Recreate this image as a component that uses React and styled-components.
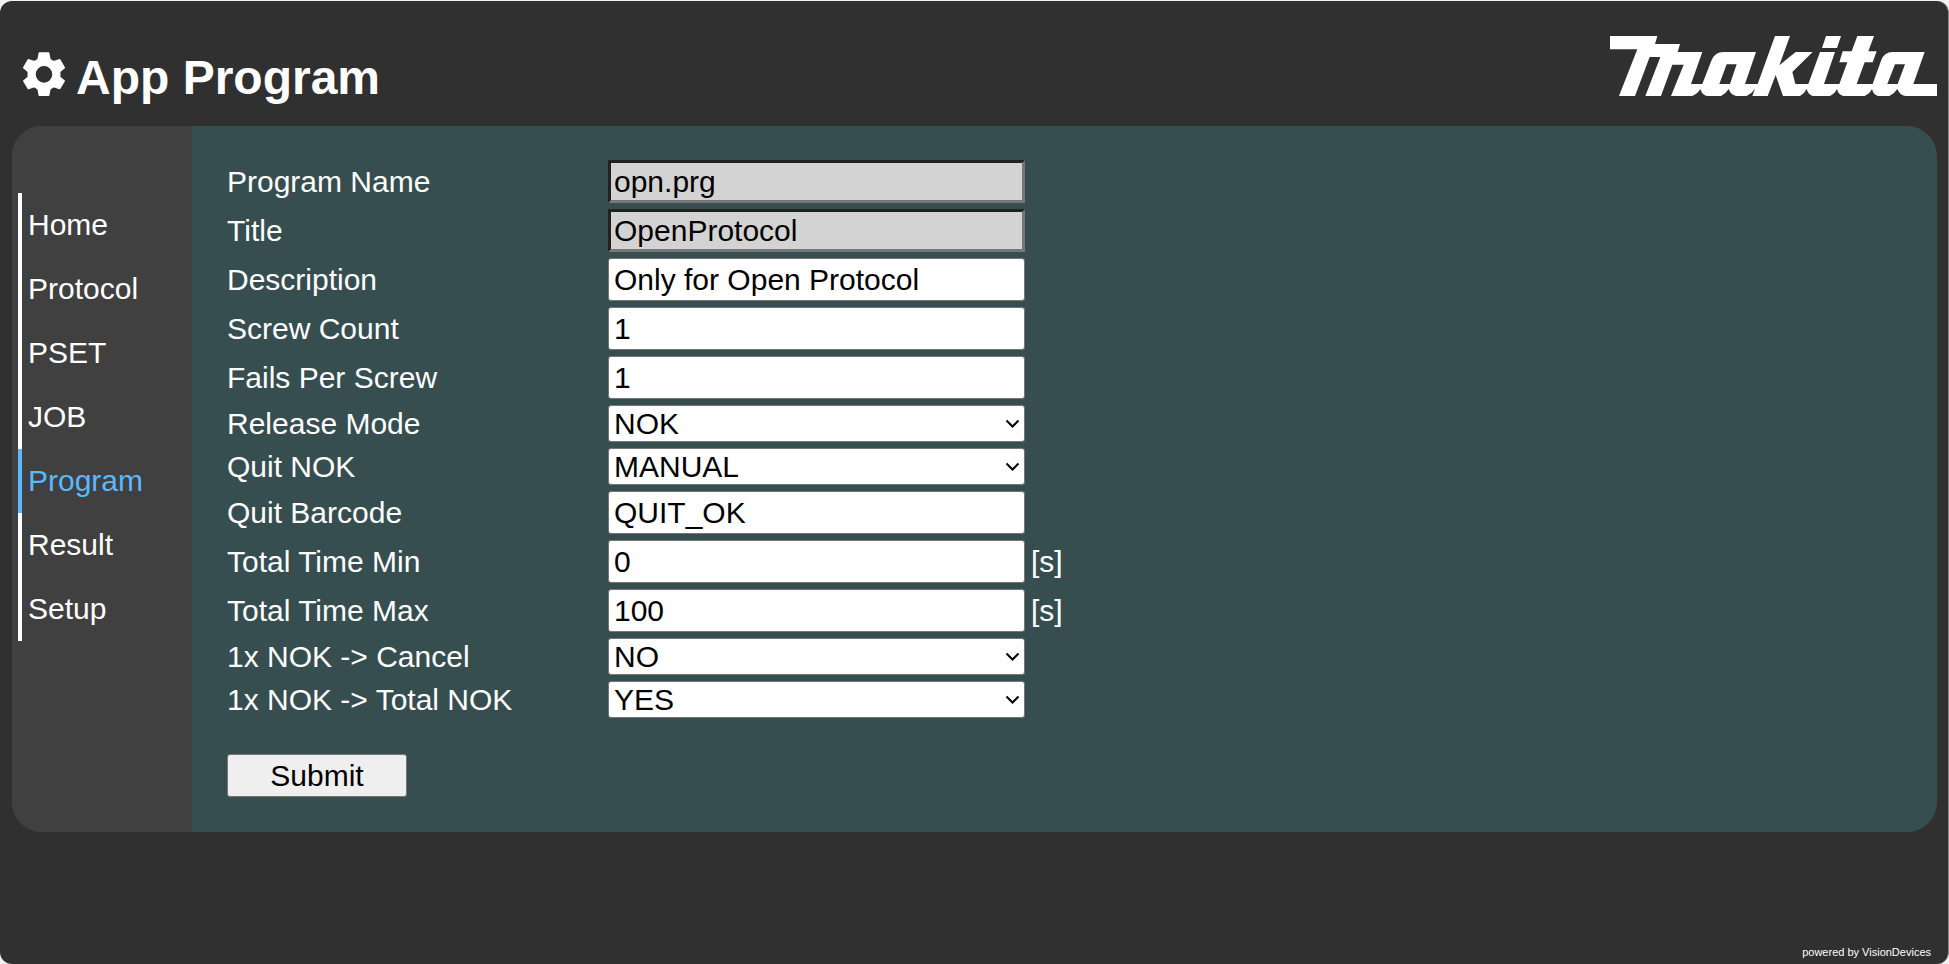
import React from 'react';
import styled, { createGlobalStyle } from 'styled-components';

const GlobalStyle = createGlobalStyle`
  * { box-sizing: border-box; }
  body {
    margin: 0;
    background: #f0f2f1;
    color: #fff;
    font: 30px/34px "Liberation Sans", Arial, sans-serif;
  }
`;

const Page = styled.div`
  display: flex;
  flex-direction: column;
  min-height: calc(100vh - 1px);
  margin-top: 1px;
  padding: 0 11px 0 12px;
  border-right: 1px solid #8a8a8a;
  border-radius: 12px;
  background: #303030;
`;

const Header = styled.header`
  display: flex;
  justify-content: space-between;
  align-items: flex-start;
  height: 125px;
  padding: 35px 0 0 11px;
`;

const Heading = styled.div`
  display: flex;
  align-items: flex-start;
  gap: 11px;
  padding-top: 16px;
`;

const Title = styled.h1`
  margin: 0;
  font-size: 48px;
  line-height: 52px;
`;

const Panel = styled.div`
  display: flex;
  border-radius: 30px;
  overflow: hidden;
  background: #374e50;
`;

const Sidebar = styled.nav`
  flex: 0 0 180px;
  padding: 67px 6px;
  background: #404040;
`;

const NavLink = styled.a`
  display: block;
  padding: 15px 6px;
  border-left: 4px solid;
  color: ${(p) => (p.$active ? '#5bb8ff' : '#fff')};
  text-decoration: none;
`;

const Form = styled.form`
  flex: 1;
  padding: 34px 35px 35px;
`;

const Rows = styled.div`
  display: grid;
  gap: 6px;
`;

const Row = styled.div`
  display: grid;
  grid-template-columns: 375px 417px auto;
  align-items: center;
  column-gap: 6px;
`;

const Input = styled.input`
  height: 43px;
  padding: 2px 5px;
  border: 1px solid #767676;
  border-radius: 3px;
  background: #fff;
  color: #000;
  font: inherit;

  &:read-only {
    padding: 2px 3px;
    border: 3px inset #767676;
    border-radius: 0;
    background: #d3d3d3;
  }
`;

const SelectBox = styled.div`
  display: grid;
  align-items: center;
`;

const Select = styled.select`
  grid-area: 1 / 1;
  height: 37px;
  padding: 0 5px;
  appearance: none;
  border: 1px solid #767676;
  border-radius: 3px;
  background: #fff;
  color: #000;
  font: inherit;
`;

const Arrow = styled.svg`
  grid-area: 1 / 1;
  justify-self: end;
  margin-right: 5px;
  pointer-events: none;
`;

const Submit = styled.button`
  display: block;
  width: 180px;
  height: 43px;
  margin-top: 36px;
  padding: 0;
  border: 1px solid #767676;
  border-radius: 3px;
  background: #efefef;
  color: #000;
  font: inherit;
`;

const Footer = styled.footer`
  margin-top: auto;
  padding: 0 6px 5px;
  font-size: 11px;
  line-height: 13px;
  text-align: right;
`;

const GearIcon = () => (
  <svg width="42" height="44" viewBox="24 20 126 132" aria-hidden="true">
    <path
      fill="#fff"
      stroke="#fff"
      strokeWidth="4"
      strokeLinejoin="round"
      fillRule="evenodd"
      d="M73 23H101L105 43L116 49L134 43L148 67L134 79Q135 87 134 95L148 107L134 130L116 124L105 131L101 150H73L69 131L58 124L40 130L26 107L40 95Q39 87 40 79L26 67L40 43L58 49L69 43ZM87 60A27 27 0 1 0 87 114A27 27 0 1 0 87 60Z"
    />
  </svg>
);

const MakitaLogo = () => (
  <svg width="327" height="60" viewBox="60 108 981 180" fill="#fff" role="img" aria-label="Makita">
    <path
      fillRule="evenodd"
      d="M60 108H202L195 132H270L263 156H337L303 252H337L364 182Q374 156 400 156H498L465 252H503L555 108H600L568 196L617 156H668L607 216L616 252H655L690 156H735L702 252H748L772 187H748L758 154H785L802 108H852L835 154H860L848 187H824L800 252H848L873 182Q882 156 908 156H1004L970 252H1041V288H946Q930 286 922 267Q914 280 898 288H864Q850 284 846 267Q840 280 824 288H760Q745 284 741 267Q735 280 720 288H668Q655 284 650 267Q644 280 630 288H579L557 225L533 288H487L495 266Q486 280 470 288H438Q422 284 416 267Q408 280 393 288H350Q336 284 331 267Q324 280 307 288H243L281 194H247L213 288H166L211 171H179L135 288H87L142 148H60ZM410 193H440L420 252H388ZM915 193H945L923 252H892Z"
    />
    <path d="M708 108H753L741 144H696Z" />
  </svg>
);

const NAV = ['Home', 'Protocol', 'PSET', 'JOB', 'Program', 'Result', 'Setup'];

const FIELDS = [
  { id: 'name', label: 'Program Name', value: 'opn.prg', readOnly: true },
  { id: 'title', label: 'Title', value: 'OpenProtocol', readOnly: true },
  { id: 'description', label: 'Description', value: 'Only for Open Protocol' },
  { id: 'screws', label: 'Screw Count', value: '1' },
  { id: 'fails', label: 'Fails Per Screw', value: '1' },
  { id: 'release', label: 'Release Mode', value: 'NOK', options: ['NOK', 'OK'] },
  { id: 'quit', label: 'Quit NOK', value: 'MANUAL', options: ['MANUAL', 'AUTO'] },
  { id: 'barcode', label: 'Quit Barcode', value: 'QUIT_OK' },
  { id: 'min', label: 'Total Time Min', value: '0', unit: '[s]' },
  { id: 'max', label: 'Total Time Max', value: '100', unit: '[s]' },
  { id: 'cancel', label: '1x NOK -> Cancel', value: 'NO', options: ['NO', 'YES'] },
  { id: 'total', label: '1x NOK -> Total NOK', value: 'YES', options: ['NO', 'YES'] },
];

const Field = ({ id, label, value, options, unit, readOnly }) => (
  <Row>
    <label htmlFor={id}>{label}</label>
    {options ? (
      <SelectBox>
        <Select id={id} defaultValue={value}>
          {options.map((o) => <option key={o}>{o}</option>)}
        </Select>
        <Arrow width="15" height="9" viewBox="0 0 15 9" fill="none" stroke="#000" strokeWidth="2">
          <path d="M1.5 1.5l6 6 6-6" />
        </Arrow>
      </SelectBox>
    ) : (
      <Input id={id} defaultValue={value} readOnly={readOnly} />
    )}
    {unit && <span>{unit}</span>}
  </Row>
);

export default function App() {
  return (
    <Page>
      <GlobalStyle />
      <Header>
        <Heading>
          <GearIcon />
          <Title>App Program</Title>
        </Heading>
        <MakitaLogo />
      </Header>
      <Panel>
        <Sidebar>
          {NAV.map((n) => (
            <NavLink key={n} href={`#${n.toLowerCase()}`} $active={n === 'Program'}>{n}</NavLink>
          ))}
        </Sidebar>
        <Form onSubmit={(e) => e.preventDefault()}>
          <Rows>
            {FIELDS.map((f) => <Field key={f.id} {...f} />)}
          </Rows>
          <Submit type="submit">Submit</Submit>
        </Form>
      </Panel>
      <Footer>powered by VisionDevices</Footer>
    </Page>
  );
}
